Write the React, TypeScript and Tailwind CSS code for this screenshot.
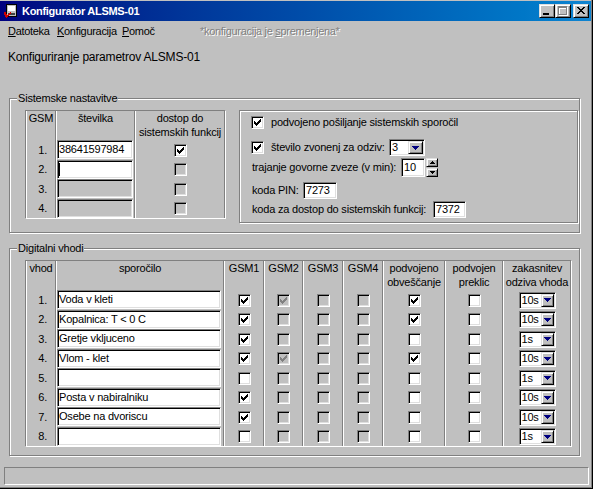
import React from "react";

const sunken =
  "border border-t-[#808080] border-l-[#808080] border-b-white border-r-white shadow-[inset_1px_1px_0_#000,inset_-1px_-1px_0_#dfdfdf]";
const raised =
  "border border-t-[#dfdfdf] border-l-[#dfdfdf] border-b-black border-r-black shadow-[inset_1px_1px_0_#fff,inset_-1px_-1px_0_#808080]";
const etched = "border border-[#808080] shadow-[inset_1px_1px_0_#fff,1px_1px_0_#fff]";
const col = "border-l border-l-white border-r border-r-[#808080]";

const CHECK =
  "M6 0h1v1h-1zM5 1h2v1h-2zM0 2h1v1h-1zM4 2h3v1h-3zM0 3h2v1h-2zM3 3h3v1h-3zM0 4h5v1h-5zM1 5h3v1h-3zM2 6h1v1h-1z";

function CheckBox({ checked = false, disabled = false }: { checked?: boolean; disabled?: boolean }) {
  return (
    <span
      className={`flex w-[13px] h-[13px] shrink-0 items-center justify-center ${sunken} ${
        disabled ? "bg-[#c0c0c0]" : "bg-white"
      }`}
    >
      {checked && (
        <svg width="7" height="7" viewBox="0 0 7 7" shapeRendering="crispEdges">
          <path d={CHECK} fill={disabled ? "#808080" : "#000"} />
        </svg>
      )}
    </span>
  );
}

function DownArrow() {
  return (
    <svg width="7" height="4" viewBox="0 0 7 4" shapeRendering="crispEdges">
      <path d="M0 0h7v1h-7zM1 1h5v1h-5zM2 2h3v1h-3zM3 3h1v1h-1z" fill="#000080" />
    </svg>
  );
}

function Combo({ value, wide = false }: { value: string; wide?: boolean }) {
  return (
    <div className={`flex h-[17px] bg-white p-[1px] ${sunken} ${wide ? "w-[36px]" : "w-[37px]"}`}>
      <span className="flex-1 pl-[1px] leading-[13px]">{value}</span>
      <span className={`flex items-center justify-center h-[13px] bg-[#c0c0c0] ${raised} ${wide ? "w-[15px]" : "w-[13px]"}`}>
        <DownArrow />
      </span>
    </div>
  );
}

function TitleBar() {
  return (
    <div className="mt-[1px] h-[20px] flex items-center bg-linear-to-r from-[#000080] to-[#1084d0] pl-[3px] pr-[2px]">
      <svg width="16" height="16" viewBox="0 0 16 16" shapeRendering="crispEdges">
        <rect x="3.5" y="1.5" width="10" height="12" fill="#c0c0c0" stroke="#000" />
        <rect x="5" y="3" width="7" height="5" fill="#fff" />
        <rect x="5" y="10" width="7" height="2" fill="#404040" />
        <path d="M1 9h2v2h1v1h1v-1h1v-1h1v-1h1v2h-1v1h-1v1h-1v1h-1v1h-1v-1h-1v-2h-1z" fill="#d00000" />
      </svg>
      <span className="ml-[3px] text-white font-bold text-[11px] tracking-[-0.3px]">Konfigurator ALSMS-01</span>
      <div className="ml-auto flex items-center">
        <div className={`w-[16px] h-[14px] bg-[#c0c0c0] ${raised}`}>
          <svg width="14" height="12" viewBox="0 0 14 12" shapeRendering="crispEdges">
            <rect x="3" y="8" width="6" height="2" fill="#000" />
          </svg>
        </div>
        <div className={`w-[16px] h-[14px] bg-[#c0c0c0] ${raised}`}>
          <svg width="14" height="12" viewBox="0 0 14 12" shapeRendering="crispEdges">
            <path d="M3 2h9v9h-9zM4 4v6h7v-6z" fill="#fff" fillRule="evenodd" />
            <path d="M2 1h9v9h-9zM3 3v6h7v-6z" fill="#808080" fillRule="evenodd" />
          </svg>
        </div>
        <div className={`ml-[2px] w-[16px] h-[14px] bg-[#c0c0c0] ${raised}`}>
          <svg width="14" height="12" viewBox="0 0 14 12" shapeRendering="crispEdges">
            <path
              transform="translate(3 2)"
              d="M0 0h2v1h-2zM6 0h2v1h-2zM1 1h2v1h-2zM5 1h2v1h-2zM2 2h4v1h-4zM3 3h2v1h-2zM2 4h4v1h-4zM1 5h2v1h-2zM5 5h2v1h-2zM0 6h2v1h-2zM6 6h2v1h-2z"
              fill="#000"
            />
          </svg>
        </div>
      </div>
    </div>
  );
}

function MenuBar() {
  return (
    <div className="h-[21px] flex items-center pl-[8px] text-[11px] tracking-[-0.3px]">
      <span className="w-[49px]">
        <u>D</u>atoteka
      </span>
      <span className="w-[65px]">
        <u>K</u>onfiguracija
      </span>
      <span className="w-[78px]">
        <u>P</u>omoč
      </span>
      <span className="text-[#808080] [text-shadow:1px_1px_0_#fff]">
        *konfiguracija je <u>s</u>premenjena*
      </span>
    </div>
  );
}

function Group({ label, height, children }: { label: string; height: string; children: React.ReactNode }) {
  return (
    <div className={`relative ml-[9px] w-[571px] pt-[11px] pl-[15px] ${etched} ${height}`}>
      <span className="absolute left-[7px] -top-[7px] px-[1px] bg-[#c0c0c0] leading-[13px]">{label}</span>
      {children}
    </div>
  );
}

const gsmRows = [
  { n: "1.", num: "38641597984", on: true, active: true, check: true },
  { n: "2.", num: "", on: true, active: false, check: false, caret: true },
  { n: "3.", num: "", on: false, active: false, check: false },
  { n: "4.", num: "", on: false, active: false, check: false },
];

const inputs = [
  { msg: "Voda v kleti", g: [true, true, false, false], dbl: true, pre: false, d: "10s" },
  { msg: "Kopalnica: T < 0 C", g: [true, false, false, false], dbl: true, pre: false, d: "10s" },
  { msg: "Gretje vkljuceno", g: [true, false, false, false], dbl: false, pre: false, d: "1s" },
  { msg: "Vlom - klet", g: [true, true, false, false], dbl: true, pre: false, d: "10s" },
  { msg: "", g: [false, false, false, false], dbl: false, pre: false, d: "1s" },
  { msg: "Posta v nabiralniku", g: [true, false, false, false], dbl: false, pre: false, d: "10s" },
  { msg: "Osebe na dvoriscu", g: [true, false, false, false], dbl: false, pre: false, d: "10s" },
  { msg: "", g: [false, false, false, false], dbl: false, pre: false, d: "1s" },
];

function SystemTable() {
  return (
    <div className="grid grid-cols-[30px_79px_90px] border border-t-[#808080] border-l-[#808080] border-r-white border-b-white">
      <div className={`${col} h-[29px] text-center leading-[14px]`}>GSM</div>
      <div className={`${col} h-[29px] text-center leading-[14px]`}>številka</div>
      <div className={`${col} h-[29px] text-center leading-[14px]`}>
        dostop do
        <br />
        sistemskih funkcij
      </div>
      {gsmRows.map((r, i) => {
        const h = i % 2 === 0 ? "h-[20px]" : "h-[19px]";
        return (
          <React.Fragment key={r.n}>
            <div className={`${col} ${h} flex items-center justify-end pr-[8px]`}>{r.n}</div>
            <div className={`${col} ${h}`}>
              <div
                className={`h-[19px] mr-[1px] flex items-center pl-[1px] ${sunken} ${
                  r.on ? "bg-white" : "bg-[#c0c0c0]"
                }`}
              >
                {r.num}
                {r.caret && <span className="w-[1px] h-[13px] bg-black" />}
              </div>
            </div>
            <div className={`${col} ${h} flex items-center justify-center`}>
              <CheckBox checked={r.check} disabled={!r.active} />
            </div>
          </React.Fragment>
        );
      })}
    </div>
  );
}

function UpArrow() {
  return (
    <svg width="5" height="3" viewBox="0 0 5 3" shapeRendering="crispEdges">
      <path d="M2 0h1v1h-1zM1 1h3v1h-3zM0 2h5v1h-5z" fill="#000" />
    </svg>
  );
}

function SmallDown() {
  return (
    <svg width="5" height="3" viewBox="0 0 5 3" shapeRendering="crispEdges">
      <path d="M0 0h5v1h-5zM1 1h3v1h-3zM2 2h1v1h-1z" fill="#000" />
    </svg>
  );
}

function SettingsPanel() {
  return (
    <div className={`ml-[13px] w-[339px] h-[113px] pl-[11px] flex flex-col ${etched}`}>
      <div className="mt-[5px] h-[13px] flex items-center">
        <CheckBox checked />
        <span className="ml-[7px] whitespace-nowrap">podvojeno pošiljanje sistemskih sporočil</span>
      </div>
      <div className="mt-[10px] h-[17px] flex items-center">
        <CheckBox checked />
        <span className="ml-[7px] w-[118px] whitespace-nowrap">število zvonenj za odziv:</span>
        <Combo value="3" wide />
      </div>
      <div className="mt-[2px] h-[19px] flex items-center">
        <span className="ml-[1px] w-[149px] whitespace-nowrap">trajanje govorne zveze (v min):</span>
        <div className={`w-[24px] h-[19px] bg-white pl-[2px] flex items-center ${sunken}`}>10</div>
        <div className="ml-[1px] flex flex-col gap-[1px]">
          <div className={`w-[12px] h-[9px] bg-[#c0c0c0] flex items-center justify-center ${raised}`}>
            <UpArrow />
          </div>
          <div className={`w-[12px] h-[9px] bg-[#c0c0c0] flex items-center justify-center ${raised}`}>
            <SmallDown />
          </div>
        </div>
      </div>
      <div className="mt-[5px] h-[17px] flex items-center">
        <span className="ml-[1px] w-[51px] whitespace-nowrap">koda PIN:</span>
        <div className={`w-[34px] h-[17px] bg-white pl-[2px] flex items-center ${sunken}`}>7273</div>
      </div>
      <div className="mt-[2px] h-[17px] flex items-center">
        <span className="ml-[1px] w-[181px] whitespace-nowrap">koda za dostop do sistemskih funkcij:</span>
        <div className={`w-[33px] h-[17px] bg-white pl-[2px] flex items-center ${sunken}`}>7372</div>
      </div>
    </div>
  );
}

const headers = [
  ["vhod"],
  ["sporočilo"],
  ["GSM1"],
  ["GSM2"],
  ["GSM3"],
  ["GSM4"],
  ["podvojeno", "obveščanje"],
  ["podvojen", "preklic"],
  ["zakasnitev", "odziva vhoda"],
];

function InputsTable() {
  return (
    <div className="w-[547px] grid grid-cols-[30px_168px_40px_39px_40px_40px_62px_58px_68px] border border-t-[#808080] border-l-[#808080] border-r-white border-b-white">
      {headers.map((h) => (
        <div key={h[0]} className={`${col} h-[29px] text-center leading-[14px] whitespace-nowrap`}>
          {h[0]}
          {h[1] && (
            <>
              <br />
              {h[1]}
            </>
          )}
        </div>
      ))}
      {inputs.map((r, i) => {
        const h = i % 2 === 0 ? "h-[20px]" : "h-[19px]";
        return (
          <React.Fragment key={i}>
            <div className={`${col} ${h} flex items-center justify-end pr-[8px]`}>{i + 1}.</div>
            <div className={`${col} ${h}`}>
              <div className={`h-[19px] mr-[2px] bg-white flex items-center pl-[1px] whitespace-nowrap ${sunken}`}>
                {r.msg}
              </div>
            </div>
            {r.g.map((g, j) => (
              <div key={j} className={`${col} ${h} flex items-center justify-center`}>
                <CheckBox checked={g} disabled={j > 0} />
              </div>
            ))}
            <div className={`${col} ${h} flex items-center justify-center`}>
              <CheckBox checked={r.dbl} />
            </div>
            <div className={`${col} ${h} flex items-center justify-center`}>
              <CheckBox checked={r.pre} />
            </div>
            <div className={`${col} ${h} flex items-center justify-center`}>
              <Combo value={r.d} />
            </div>
          </React.Fragment>
        );
      })}
    </div>
  );
}

export default function App() {
  return (
    <div className="w-[593px] h-[489px] bg-[#c0c0c0] text-black text-[11px] tracking-[-0.2px] font-['Liberation_Sans',Arial,sans-serif] overflow-hidden">
      <div className="h-full flex flex-col border-r border-b border-r-black border-b-black">
        <div className="flex-1 flex flex-col border-r border-b border-r-[#808080] border-b-[#808080]">
          <TitleBar />
          <MenuBar />
          <h1 className="mt-[8px] ml-[8px] text-[12px] leading-[15px] tracking-[-0.2px]">
            Konfiguriranje parametrov ALSMS-01
          </h1>
          <div className="mt-[33px]">
            <Group label="Sistemske nastavitve" height="h-[135px]">
              <div className="flex items-start">
                <SystemTable />
                <SettingsPanel />
              </div>
            </Group>
          </div>
          <div className="mt-[15px]">
            <Group label="Digitalni vhodi" height="h-[208px]">
              <InputsTable />
            </Group>
          </div>
          <div
            className="mt-[11px] ml-[4px] mr-[2px] h-[18px] border border-t-[#808080] border-l-[#808080] border-b-white border-r-white"
          />
        </div>
      </div>
    </div>
  );
}
